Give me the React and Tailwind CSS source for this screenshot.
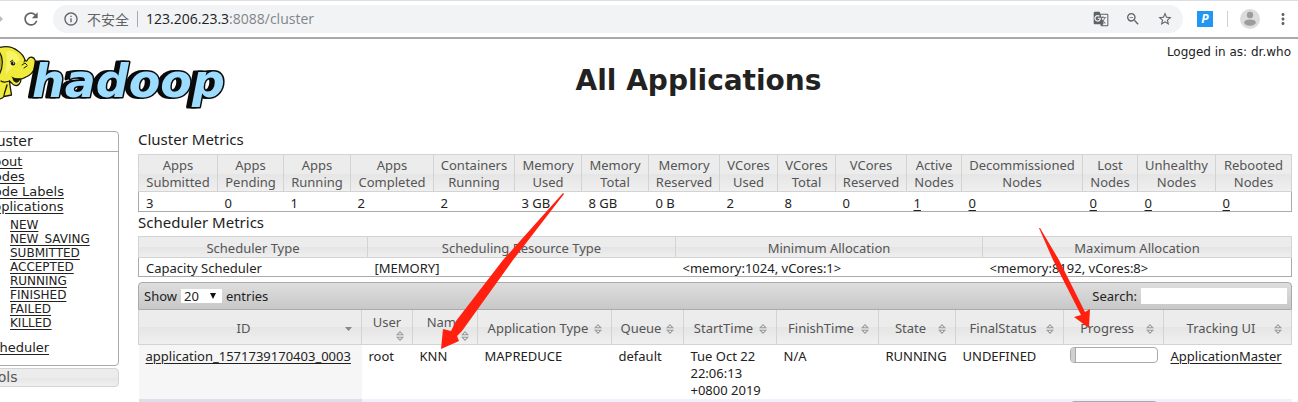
import { Fragment } from "react";
import {
  MdArrowForward,
  MdRefresh,
  MdInfoOutline,
  MdGTranslate,
  MdZoomOut,
  MdStarBorder,
  MdMoreVert,
} from "react-icons/md";

const headFill = "bg-linear-to-b from-[#ececec] from-50% via-[#e5e5e5] via-50% to-[#f0f0f0]";

const clusterMetrics = [
  { a: "Apps", b: "Submitted", value: "3", col: "w-[79px]" },
  { a: "Apps", b: "Pending", value: "0", col: "w-[66px]" },
  { a: "Apps", b: "Running", value: "1", col: "w-[67px]" },
  { a: "Apps", b: "Completed", value: "2", col: "w-[83px]" },
  { a: "Containers", b: "Running", value: "2", col: "w-[81px]" },
  { a: "Memory", b: "Used", value: "3 GB", col: "w-[67px]" },
  { a: "Memory", b: "Total", value: "8 GB", col: "w-[67px]" },
  { a: "Memory", b: "Reserved", value: "0 B", col: "w-[71px]" },
  { a: "VCores", b: "Used", value: "2", col: "w-[58px]" },
  { a: "VCores", b: "Total", value: "8", col: "w-[58px]" },
  { a: "VCores", b: "Reserved", value: "0", col: "w-[71px]" },
  { a: "Active", b: "Nodes", value: "1", link: true, col: "w-[55px]" },
  { a: "Decommissioned", b: "Nodes", value: "0", link: true, col: "w-[121px]" },
  { a: "Lost", b: "Nodes", value: "0", link: true, col: "w-[55px]" },
  { a: "Unhealthy", b: "Nodes", value: "0", link: true, col: "w-[78px]" },
  { a: "Rebooted", b: "Nodes", value: "0", link: true, col: "w-[76px]" },
];

const schedulerMetrics = [
  { name: "Scheduler Type", value: "Capacity Scheduler", col: "w-[229px]" },
  { name: "Scheduling Resource Type", value: "[MEMORY]", col: "w-[308px]" },
  { name: "Minimum Allocation", value: "<memory:1024, vCores:1>", col: "w-[307px]" },
  { name: "Maximum Allocation", value: "<memory:8192, vCores:8>", col: "w-[309px]" },
];

const appColumns = [
  { name: "ID", col: "w-[223px]", sorted: true },
  { name: "User", col: "w-[51px]", stacked: true },
  { name: "Name", col: "w-[65px]", stacked: true },
  { name: "Application Type", col: "w-[134px]" },
  { name: "Queue", col: "w-[72px]" },
  { name: "StartTime", col: "w-[93px]" },
  { name: "FinishTime", col: "w-[102px]" },
  { name: "State", col: "w-[77px]" },
  { name: "FinalStatus", col: "w-[108px]" },
  { name: "Progress", col: "w-[100px]" },
  { name: "Tracking UI", col: "w-[128px]" },
];

const appStates = ["NEW", "NEW_SAVING", "SUBMITTED", "ACCEPTED", "RUNNING", "FINISHED", "FAILED", "KILLED"];

function BrowserBar() {
  return (
    <header className="flex h-[39px] shrink-0 items-center overflow-hidden border-t border-b-2 border-t-[#dcdde3] border-b-[#aaaaaa] bg-white text-[#5f6368]">
      <button aria-label="Forward" className="-ml-3 text-[#babcbe]">
        <MdArrowForward className="size-[18px]" />
      </button>
      <button aria-label="Reload" className="ml-[15px]">
        <MdRefresh className="size-[20px]" />
      </button>
      <div className="ml-3 flex h-7 flex-1 items-center rounded-full bg-[#f1f3f4] px-2.5">
        <MdInfoOutline className="size-4" />
        <span className="ml-2 font-['Noto_Sans_CJK_SC',sans-serif] text-[14px] leading-5">不安全</span>
        <span className="mx-2 h-4 w-px bg-[#a6a8ab]" />
        <span className="flex-1 font-['Open_Sans',sans-serif] text-[14px] leading-5 text-[#80868b]">
          <span className="text-[#202124]">123.206.23.3</span>:8088/cluster
        </span>
        <div className="flex items-center gap-4">
          <button aria-label="Translate"><MdGTranslate className="size-4" /></button>
          <button aria-label="Zoom"><MdZoomOut className="size-4" /></button>
          <button aria-label="Bookmark"><MdStarBorder className="size-4" /></button>
        </div>
      </div>
      <button className="ml-3.5 flex size-4 items-center justify-center bg-[#2196f3] font-['Open_Sans',sans-serif] text-[12px] leading-4 font-bold text-white italic">
        P
      </button>
      <span className="ml-3.5 h-4 w-px bg-[#cfd0d2]" />
      <button aria-label="Profile" className="ml-3">
        <svg viewBox="0 0 20 20" className="size-5">
          <circle cx="10" cy="10" r="10" fill="#dcdcdc" />
          <circle cx="10" cy="6" r="3.2" fill="#9c9c9c" />
          <ellipse cx="10" cy="13.6" rx="5.8" ry="3.2" fill="#9c9c9c" />
        </svg>
      </button>
      <button aria-label="Menu" className="mr-1.5 ml-3.5">
        <MdMoreVert className="size-[18px]" />
      </button>
    </header>
  );
}

function Logo() {
  return (
    <svg viewBox="0 0 232 72" className="h-[72px] w-[232px] shrink-0" role="img" aria-label="hadoop">
      <g stroke="#1a1a08" strokeWidth="1.3" strokeLinejoin="round" strokeLinecap="round">
        <path
          d="M-2 7 C4 5 12 5 18 10 C21 12 24 16 25 19 C26 21 27 20 28 18 C30 15 34 16 35 19 C37 26 33 33 26 36 C24 37 22 38 21 38 C21 42 18 46 14 44 C12 43 11 41 9.500 40 C10 46 11 50 11.500 54 L4 55.500 C3 57 0 58 -2 58Z"
          fill="#f0ea3c"
        />
        <path d="M-2 11 C2 14 3 24 -2 33 Z" fill="#b9b32c" stroke="none" />
        <path d="M-2 10 C3 14 4 25 -1 34 M1 40 C4 42 7 41 9.500 40 M7 44 C6 48 4 52 4 55" fill="none" />
        <path d="M13 37 C14 41 17 43 20 38 C17 38 15 38 13 37Z" fill="#1a1a08" />
        <path d="M12 36 C13 38 18 39 21 38 M22 24 L25 22 L27 24 M24 27 L27 25 M25 19 L24 21" fill="none" strokeWidth="1" />
      </g>
      <path d="M6 11 C12 8 18 13 20 19 C15 24 9 28 6 34 C5 26 8 18 6 11Z" fill="#fffb86" opacity=".55" />
      <ellipse cx="13" cy="22.500" rx="2.200" ry="2" fill="#1a1a08" />
      <circle cx="13.700" cy="22" r=".7" fill="#fff" />
      <path d="M10 21 L13 19" stroke="#1a1a08" strokeWidth="1" />
      <text
        x="32"
        y="56"
        fill="#9bdcff"
        stroke="#0a0a0a"
        strokeWidth="3"
        paintOrder="stroke"
        strokeLinejoin="round"
        fontSize="46"
        className="font-['DejaVu_Sans',sans-serif] font-bold italic drop-shadow-[-4px_0_0_#0a0a0a]"
      >
        hadoop
      </text>
    </svg>
  );
}

function SideLink({ children }) {
  return (
    <a href="#" className="underline underline-offset-2">{children}</a>
  );
}

function Sidebar() {
  return (
    <nav className="-ml-10 w-[159px] shrink-0 font-['DejaVu_Sans',sans-serif] text-[13px] text-[#222]">
      <section className="rounded-[4px] border border-[#aaa] bg-white">
        <h3 className="border-b border-[#aaa] pl-[22px] text-[14px] leading-[19px]">Cluster</h3>
        <ul className="pt-[2px] pb-2.5 pl-[23px] leading-[15px]">
          <li><SideLink>About</SideLink></li>
          <li><SideLink>Nodes</SideLink></li>
          <li><SideLink>Node Labels</SideLink></li>
          <li>
            <SideLink>Applications</SideLink>
            <ul className="pt-1 pb-2.5 pl-[26px] text-[12px] leading-[14px]">
              {appStates.map((s) => (
                <li key={s}><SideLink>{s}</SideLink></li>
              ))}
            </ul>
          </li>
          <li><SideLink>Scheduler</SideLink></li>
        </ul>
      </section>
      <h3 className={"mt-0.5 rounded-[4px] border border-[#d3d3d3] pl-[22px] text-[14px] leading-[17px] text-[#555] " + headFill}>
        Tools
      </h3>
    </nav>
  );
}

function SortIcon({ sorted }) {
  return sorted ? (
    <svg viewBox="0 0 8 12" className="h-3 w-2 shrink-0"><path d="M1 4h7l-3.500 4z" fill="#888" /></svg>
  ) : (
    <svg viewBox="0 0 8 12" className="h-3 w-2 shrink-0">
      <path d="M1.200 4.800h5.600L4 1.700zM1.200 7.200h5.600L4 10.300z" fill="#f4f4f4" stroke="#999" strokeWidth="1.100" />
    </svg>
  );
}

function ProgressBar() {
  return (
    <div role="progressbar" aria-label="Progress" aria-valuenow={5} className="flex h-4 overflow-hidden rounded-[4px] border border-[#aaa] bg-white">
      <div className="w-[6%] border-r border-[#aaa] bg-[#d0d0d0]" />
    </div>
  );
}

function ClusterTable() {
  return (
    <table className="w-full table-fixed border-collapse border border-[#aaa] text-[13px] leading-[17px]">
      <colgroup>{clusterMetrics.map((m, i) => <col key={i} className={m.col} />)}</colgroup>
      <thead className={headFill}>
        <tr>
          {clusterMetrics.map((m, i) => (
            <th key={i} className="border border-[#d3d3d3] pt-[2px] font-normal whitespace-nowrap text-[#555]">
              {m.a}<br />{m.b}
            </th>
          ))}
        </tr>
      </thead>
      <tbody>
        <tr>
          {clusterMetrics.map((m, i) => (
            <td key={i} className="pt-[3px] pl-[7px] leading-4">
              {m.link ? <a href="#" className="underline underline-offset-2">{m.value}</a> : m.value}
            </td>
          ))}
        </tr>
      </tbody>
    </table>
  );
}

function SchedulerTable() {
  return (
    <table className="w-full table-fixed border-collapse border border-[#aaa] text-[13px]">
      <colgroup>{schedulerMetrics.map((m) => <col key={m.name} className={m.col} />)}</colgroup>
      <thead className={headFill}>
        <tr>
          {schedulerMetrics.map((m) => (
            <th key={m.name} className="border border-[#d3d3d3] pt-[2px] leading-[18px] font-normal text-[#555]">{m.name}</th>
          ))}
        </tr>
      </thead>
      <tbody>
        <tr>
          {schedulerMetrics.map((m) => (
            <td key={m.name} className="pt-[2px] pl-[7px] leading-4">{m.value}</td>
          ))}
        </tr>
      </tbody>
    </table>
  );
}

function AppsTable() {
  const cell = "pt-[3px] pl-[7px] align-top";
  return (
    <section className="mt-[5px] text-[13px] leading-[17px]">
      <div className="-mr-px flex h-7 items-center justify-between rounded-t-[4px] border border-[#aaa] bg-linear-to-b from-[#dedede] to-[#c8c8c8] pr-1 pl-[5px]">
        <label className="flex items-center gap-1">
          Show
          <span className="relative flex items-center">
            <select defaultValue="20" className="h-3.5 w-[41px] appearance-none bg-white pl-[3px] leading-[14px]">
              <option>20</option>
              <option>50</option>
              <option>100</option>
            </select>
            <svg viewBox="0 0 6 6" className="pointer-events-none absolute right-1.5 size-1.5"><path d="M0 0h6L3 6z" fill="#111" /></svg>
          </span>
          entries
        </label>
        <label className="flex items-center gap-1">
          Search:
          <input type="text" className="h-4 w-[146px] bg-white" />
        </label>
      </div>
      <table className="w-full table-fixed border-collapse">
        <colgroup>{appColumns.map((c) => <col key={c.name} className={c.col} />)}</colgroup>
        <thead className={headFill}>
          <tr className="h-[34px]">
            {appColumns.map((c) => (
              <th key={c.name} className="border border-t-0 border-[#d3d3d3] p-0 font-normal whitespace-nowrap text-[#555]">
                {c.stacked ? (
                  <button className="flex w-full flex-col items-center pt-0.5">
                    <span className="leading-4">{c.name}</span>
                    <span className="flex w-full justify-end pr-2"><SortIcon /></span>
                  </button>
                ) : (
                  <button className="flex w-full items-center pt-1 pr-[9px] pl-1">
                    <span className="flex-1">{c.name}</span>
                    <SortIcon sorted={c.sorted} />
                  </button>
                )}
              </th>
            ))}
          </tr>
        </thead>
        <tbody>
          <tr className="bg-white">
            <td className={cell + " bg-[#f6f6f6]"}>
              <a href="#" className="underline underline-offset-2">application_1571739170403_0003</a>
            </td>
            <td className={cell}>root</td>
            <td className={cell}>KNN</td>
            <td className={cell}>MAPREDUCE</td>
            <td className={cell}>default</td>
            <td className={cell}>
              {["Tue Oct 22", "22:06:13", "+0800 2019"].map((t, i) => (
                <Fragment key={t}>{i > 0 && <br />}{t}</Fragment>
              ))}
            </td>
            <td className={cell}>N/A</td>
            <td className={cell}>RUNNING</td>
            <td className={cell}>UNDEFINED</td>
            <td className="px-1.5 pt-[2px] align-top"><ProgressBar /></td>
            <td className={cell}><a href="#" className="underline underline-offset-2">ApplicationMaster</a></td>
          </tr>
          <tr className="bg-[#f1f1fe]">
            <td className="bg-[#dedeea]" />
            <td colSpan={8} />
            <td className="px-1.5 pt-[2px] align-top"><ProgressBar /></td>
            <td />
          </tr>
        </tbody>
      </table>
    </section>
  );
}

export default function App() {
  return (
    <div className="relative flex h-screen flex-col overflow-hidden bg-white font-['Noto_Sans','Open_Sans',sans-serif] text-[#222]">
      <BrowserBar />
      <div className="grid grid-cols-[232px_1fr_126px] pt-[2px] pr-[7px] pb-[18px]">
        <Logo />
        <h1 className="self-center pt-2 text-center font-['DejaVu_Sans',sans-serif] text-[28px] leading-9 font-bold">
          All Applications
        </h1>
        <p className="pt-[3px] text-right font-['DejaVu_Sans',sans-serif] text-[12px] leading-4 whitespace-nowrap">Logged in as: dr.who</p>
      </div>
      <div className="flex items-start gap-[19px] pr-[7px]">
        <Sidebar />
        <main className="min-w-0 flex-1">
          <h2 className="pb-[7px] text-[15px] leading-4">Cluster Metrics</h2>
          <ClusterTable />
          <h2 className="pt-0.5 pb-1.5 text-[15px] leading-4">Scheduler Metrics</h2>
          <SchedulerTable />
          <AppsTable />
        </main>
      </div>
      <svg viewBox="0 0 124 157" className="pointer-events-none absolute top-[193px] left-[440px] h-[157px] w-[124px]">
        <path d="M123 0 L63 67 L16 128 L11 138 L3 136 L1 156 L19 148 L17 143 L22 138 L73 67 L124 1Z" fill="#ff2010" />
      </svg>
      <svg viewBox="0 0 54 101" className="pointer-events-none absolute top-[228px] left-[1038px] h-[101px] w-[54px]">
        <path d="M1 0 L15 32 L43 87 L36 89 L51 100 L52 81 L47 84 L21 32 L2 0Z" fill="#ff2010" />
      </svg>
    </div>
  );
}
